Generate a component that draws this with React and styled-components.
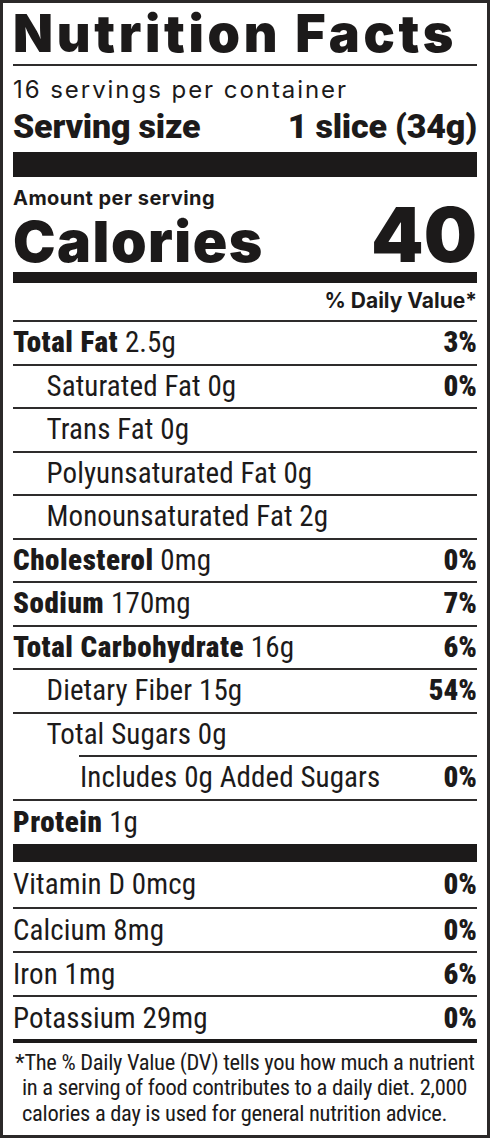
import React from 'react';
import styled, { createGlobalStyle } from 'styled-components';

const GlobalStyle = createGlobalStyle`
  html, body { margin: 0; padding: 0; background: #ffffff; }
  #root { width: 490px; }
`;

const INK = '#1c1a1a';
const RULE = '#2e2c2c';

const Label = styled.section`
  box-sizing: border-box;
  width: 490px;
  height: 1138px;
  border: 3px solid #2b2929;
  background: #fff;
  padding: 0 10px;
  color: ${INK};
  display: flex;
  flex-direction: column;
  overflow: hidden;
`;

const Title = styled.h1`
  margin: 0;
  height: 61px;
  font-family: Inter, "Liberation Sans", sans-serif;
  font-weight: 900;
  font-size: 52px;
  line-height: 61px;
  letter-spacing: 3.7px;
  white-space: nowrap;
`;

const ThinRule = styled.div`
  height: 2px;
  background: ${RULE};
`;

const Servings = styled.div`
  margin-top: 7px;
  font-family: Inter, "Liberation Sans", sans-serif;
  font-weight: 400;
  font-size: 24px;
  line-height: 34px;
  letter-spacing: 1.95px;
  white-space: nowrap;
`;

const ServingSize = styled.div`
  margin-top: 2px;
  display: flex;
  justify-content: space-between;
  font-family: Roboto, "Liberation Sans", sans-serif;
  font-weight: 900;
  font-stretch: 97%;
  font-size: 34px;
  line-height: 34px;
  letter-spacing: -0.2px;
  white-space: nowrap;
`;

const Bar = styled.div`
  height: ${(p) => p.$h}px;
  margin-top: ${(p) => p.$mt || 0}px;
  background: ${INK};
  flex-shrink: 0;
`;

const AmountPer = styled.div`
  margin-top: 9px;
  font-family: Inter, "Liberation Sans", sans-serif;
  font-weight: 700;
  font-size: 20px;
  line-height: 24px;
  letter-spacing: 0.45px;
  white-space: nowrap;
`;

const CaloriesRow = styled.div`
  height: 62px;
  display: flex;
  justify-content: space-between;
  align-items: baseline;
  font-family: Inter, "Liberation Sans", sans-serif;
  font-weight: 900;
  white-space: nowrap;
`;

const CaloriesLabel = styled.span`
  font-size: 57px;
  line-height: 49.5px;
  letter-spacing: 1.5px;
`;

const CaloriesValue = styled.span`
  font-size: 75px;
  line-height: 49.5px;
  letter-spacing: 0px;
`;

const DVHeader = styled.div`
  height: 37px;
  text-align: right;
  font-family: Inter, "Liberation Sans", sans-serif;
  font-weight: 700;
  font-size: 21px;
  line-height: 35px;
  white-space: nowrap;
`;

const Row = styled.div`
  position: relative;
  box-sizing: border-box;
  height: ${(p) => p.$h || 43.5}px;
  padding-left: ${(p) => p.$indent * 33.5}px;
  display: flex;
  align-items: center;
  justify-content: space-between;
  font-family: Roboto, "Liberation Sans", sans-serif;
  font-size: 29px;
  line-height: 29px;
  font-stretch: 80%;
  white-space: nowrap;
  border-top: ${(p) => (p.$noLine || p.$lineInset ? 'none' : `2px solid ${RULE}`)};
  padding-top: ${(p) => (p.$lineInset ? 2 : 0)}px;
  &::before {
    content: '';
    display: ${(p) => (p.$lineInset ? 'block' : 'none')};
    position: absolute;
    top: 0;
    right: 0;
    left: ${(p) => p.$lineInset}px;
    height: 2px;
    background: ${RULE};
  }
`;

const Name = styled.span`
  font-weight: 400;
  letter-spacing: 0.1px;
`;

const Strong = styled.b`
  font-weight: 900;
  font-stretch: 87%;
  letter-spacing: 0.55px;
`;

const DV = styled.span`
  font-weight: 900;
  font-stretch: 85%;
  letter-spacing: 0px;
`;

const Footnote = styled.p`
  margin: 0;
  padding: 6.5px 0 0 0;
  font-family: Roboto, "Liberation Sans", sans-serif;
  font-size: 22.5px;
  line-height: 25.7px;
  font-stretch: 75%;
  font-weight: 400;
  letter-spacing: -0.3px;
  white-space: nowrap;
`;

const FootLine = styled.span`
  display: block;
  padding-left: ${(p) => p.$pad}px;
`;

const nutrients = [
  { bold: 'Total Fat', amount: '2.5g', dv: '3%' },
  { name: 'Saturated Fat 0g', indent: 1, dv: '0%' },
  { name: 'Trans Fat 0g', indent: 1 },
  { name: 'Polyunsaturated Fat 0g', indent: 1 },
  { name: 'Monounsaturated Fat 2g', indent: 1 },
  { bold: 'Cholesterol', amount: '0mg', dv: '0%' },
  { bold: 'Sodium', amount: '170mg', dv: '7%' },
  { bold: 'Total Carbohydrate', amount: '16g', dv: '6%' },
  { name: 'Dietary Fiber 15g', indent: 1, dv: '54%' },
  { name: 'Total Sugars 0g', indent: 1 },
  { name: 'Includes 0g Added Sugars', indent: 2, dv: '0%', lineInset: 66 },
  { bold: 'Protein', amount: '1g', h: 45.5 },
];

const vitamins = [
  { name: 'Vitamin D 0mcg', dv: '0%', h: 45, noLine: true },
  { name: 'Calcium 8mg', dv: '0%', h: 44 },
  { name: 'Iron 1mg', dv: '6%', h: 44 },
  { name: 'Potassium 29mg', dv: '0%', h: 44 },
];

function NutrientRow({ item }) {
  return (
    <Row
      $indent={item.indent || 0}
      $lineInset={item.lineInset}
      $noLine={item.noLine}
      $h={item.h}
    >
      <Name>
        {item.bold && <Strong>{item.bold}</Strong>}
        {item.bold ? ` ${item.amount}` : item.name}
      </Name>
      {item.dv && <DV>{item.dv}</DV>}
    </Row>
  );
}

export default function App() {
  return (
    <>
      <GlobalStyle />
      <Label>
        <Title>Nutrition Facts</Title>
        <ThinRule />
        <Servings>16 servings per container</Servings>
        <ServingSize>
          <span>Serving size</span>
          <span>1 slice (34g)</span>
        </ServingSize>
        <Bar $h={25} $mt={9} />
        <AmountPer>Amount per serving</AmountPer>
        <CaloriesRow>
          <CaloriesLabel>Calories</CaloriesLabel>
          <CaloriesValue>40</CaloriesValue>
        </CaloriesRow>
        <Bar $h={11} />
        <DVHeader>% Daily Value*</DVHeader>
        {nutrients.map((n, i) => (
          <NutrientRow key={i} item={n} />
        ))}
        <Bar $h={18} />
        {vitamins.map((n, i) => (
          <NutrientRow key={i} item={n} />
        ))}
        <Bar $h={4} />
        <Footnote>
          <FootLine $pad={2}>*The % Daily Value (DV) tells you how much a nutrient</FootLine>
          <FootLine $pad={9}>in a serving of food contributes to a daily diet. 2,000</FootLine>
          <FootLine $pad={9}>calories a day is used for general nutrition advice.</FootLine>
        </Footnote>
      </Label>
    </>
  );
}
